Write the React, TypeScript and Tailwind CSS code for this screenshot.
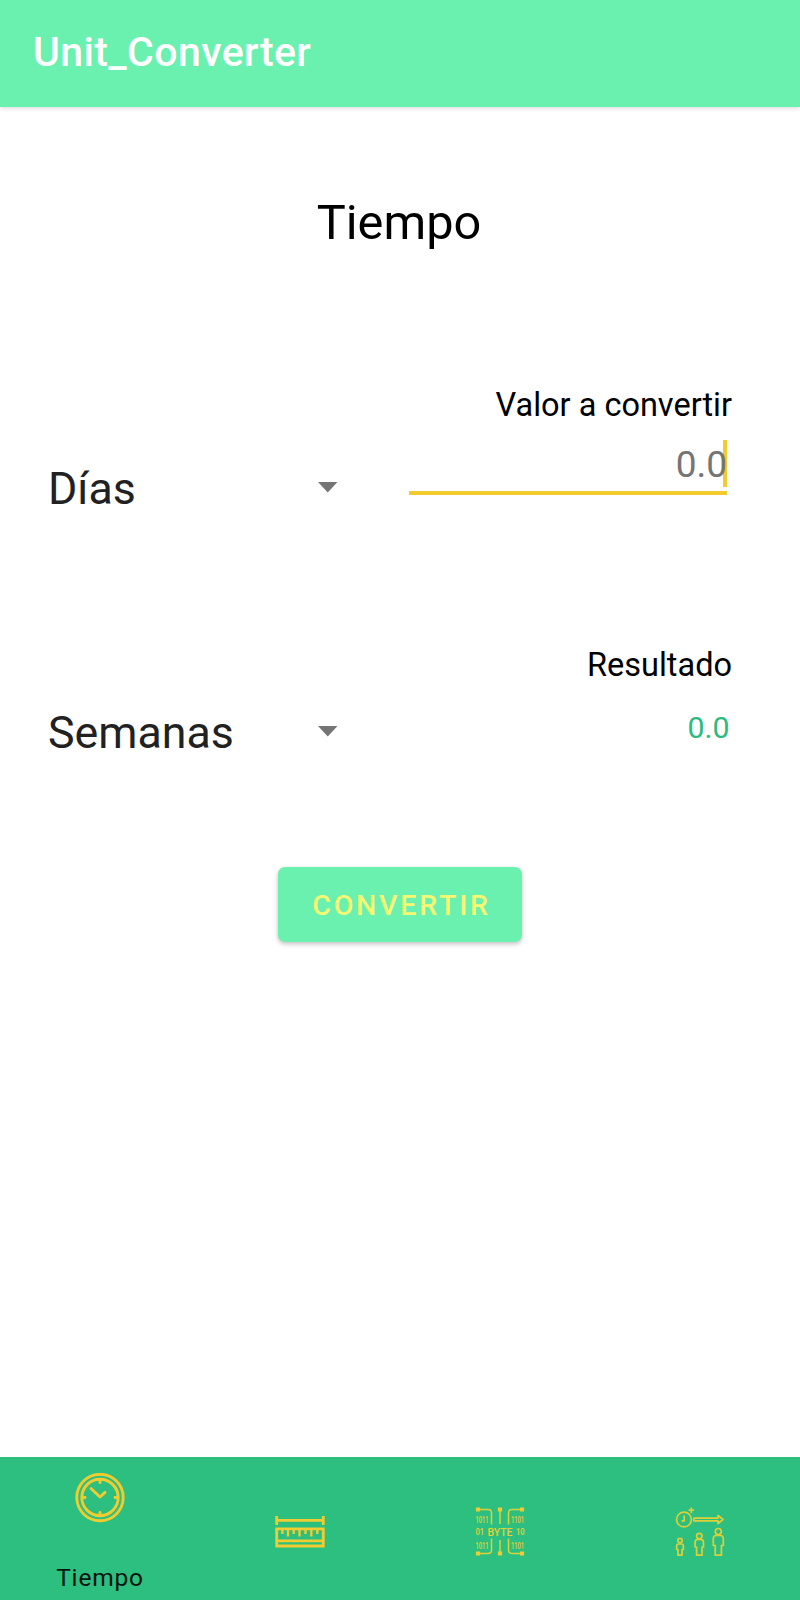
import type { ReactNode } from "react";

function Caret() {
  return (
    <svg width="20" height="11" viewBox="0 0 20 11" fill="#757575">
      <path d="M0 0h19.500L9.750 10.500z" />
    </svg>
  );
}

function Spinner({ value }: { value: string }) {
  return (
    <button className="flex h-[60px] w-[290px] items-center justify-between text-left text-[44.7px] leading-[60px] text-[#212121]">
      <span>{value}</span>
      <span className="pb-[3px]">
        <Caret />
      </span>
    </button>
  );
}

function ClockIcon() {
  return (
    <svg width="50" height="50" viewBox="0 0 50 50" fill="none" stroke="#f0cc30" strokeWidth="2.900" strokeLinecap="round">
      <circle cx="25" cy="24.500" r="23.200" />
      <circle cx="25" cy="24.500" r="18.200" />
      <path d="M16 15.500l9 8.500 5-4.600" strokeLinejoin="round" />
      <path d="M25 7.500v2M25 39.500v2M8 24.500h2M40 24.500h2" />
    </svg>
  );
}

function RulerIcon() {
  return (
    <svg width="50" height="50" viewBox="0 0 50 50" fill="none" stroke="#f0cc30" strokeWidth="2.800">
      <path d="M1.700 9v9M48.300 9v9M1.500 13.300h47" />
      <path d="M1.700 21.800h46.600v17.200H1.700zM1.600 33.800h46.800" />
      <path d="M7.400 22v5M13 22v7.500M18.700 22v5M24.500 22v7.500M30.500 22v5M36.300 22v7.500M42.300 22v5" strokeWidth="2.400" />
    </svg>
  );
}

function Bits({ x, y, width, children }: { x: number; y: number; width: number; children: string }) {
  return (
    <text x={x} y={y} textLength={width} lengthAdjust="spacingAndGlyphs" fontSize="9.500">
      {children}
    </text>
  );
}

function ByteIcon() {
  return (
    <svg className="overflow-visible" width="50" height="50" viewBox="0 0 50 50" fill="none" stroke="#d9d23a" strokeWidth="1.500">
      <path d="M4 2.500h9q3.500 0 3.500 3.500V17.500M46 2.500H37q-3.500 0-3.500 3.500V17.500M4 46.500h9q3.500 0 3.500-3.500V31.500M46 46.500H37q-3.500 0-3.500-3.500V31.500M25 4v13M25 46V33" />
      <path
        d="M1.500 1h3v3h-3zM23.500 1h3v3h-3zM45.500 1h3v3h-3zM1.500 45h3v3h-3zM23.500 45h3v3h-3zM45.500 45h3v3h-3z"
        fill="#f3cb2f"
        stroke="#f0cc30"
        strokeWidth="1.200"
      />
      <g fill="#e6d034" stroke="none" fontFamily="Roboto, sans-serif" fontWeight="500">
        <Bits x={0.5} y={15.5} width={13}>1011</Bits>
        <Bits x={36} y={15.5} width={13}>1101</Bits>
        <Bits x={0.5} y={28.3} width={8.5}>01</Bits>
        <Bits x={41} y={28.3} width={8.5}>10</Bits>
        <Bits x={0.5} y={41.5} width={13}>1011</Bits>
        <Bits x={36} y={41.5} width={13}>1101</Bits>
        <text x="12.500" y="28.700" fontSize="11.500" textLength="25" lengthAdjust="spacingAndGlyphs">
          BYTE
        </text>
      </g>
    </svg>
  );
}

function GrowthIcon() {
  return (
    <svg width="50" height="50" viewBox="0 0 50 50" fill="none" stroke="#ddcf38" strokeWidth="1.700" strokeLinejoin="round">
      <circle cx="9" cy="12.500" r="7.400" />
      <path d="M9.200 8.500v5.300H6.500M16.300 0.500v5.500M13.600 3.200h5.400" />
      <path d="M19 11.100h24V8.500l5 4-5 4V13.900H19z" />
      <circle cx="5" cy="33.500" r="2.200" />
      <path d="M3.700 37h2.600q2 0 2 2v3.500H7V48.200H3V42.500H1.700V39q0-2 2-2z" />
      <circle cx="24.300" cy="29" r="2.700" />
      <path d="M22.700 32.500h3.200q2.600 0 2.600 2.500v5H27v8.200h-5.400v-8.200h-1.500v-5q0-2.500 2.600-2.500z" />
      <circle cx="43.300" cy="24.500" r="3" />
      <path d="M41.300 28.500h4q3 0 3 3V38.500h-1.900v9.700h-6.200V38.500h-1.900v-7q0-3 3-3z" />
    </svg>
  );
}

function Tab({ label, children }: { label: string; children: ReactNode }) {
  return (
    <button aria-label={label} className="flex flex-1 items-center justify-center pt-[7px]">
      {children}
    </button>
  );
}

export default function App() {
  return (
    <div className="flex h-[1600px] w-[800px] flex-col bg-white font-[Roboto,sans-serif] text-black">
      <header className="flex h-[107px] shrink-0 items-center bg-[#6bf1af] pb-[4px] pl-[33px] shadow-[0_1px_5px_rgba(0,0,0,0.16)]">
        <h1 className="text-[41px] leading-[48px] font-medium tracking-[0.4px] text-white">Unit_Converter</h1>
      </header>

      <main className="flex flex-1 flex-col items-center">
        <h2 className="mt-[86px] pr-[2px] text-[48.700px] leading-[60px]">Tiempo</h2>

        <section className="mt-[132px] flex w-full justify-between pr-[68px] pl-[48px]">
          <div className="pt-[74px]">
            <Spinner value="Días" />
          </div>
          <div className="flex flex-col items-end">
            <label className="text-[32.500px] leading-[40px]">Valor a convertir</label>
            <div className="relative mt-[15px] mr-[5px] h-[55px] w-[318px] border-b-4 border-[#f3cb2f] text-right text-[37px] leading-[49px] text-[#757575]">
              <span className="absolute top-0 right-0 h-[47px] w-[4.500px] bg-[#f3cb2f]" />
              <span className="relative">0.0</span>
            </div>
          </div>
        </section>

        <section className="mt-[126px] flex w-full justify-between pr-[68px] pl-[48px]">
          <div className="pt-[58px]">
            <Spinner value="Semanas" />
          </div>
          <div className="flex flex-col items-end">
            <p className="text-[32.500px] leading-[40px]">Resultado</p>
            <output className="mt-[23px] mr-[2.500px] text-[30.300px] leading-[40px] text-[#2dba7f]">0.0</output>
          </div>
        </section>

        <button className="mt-[104px] h-[75px] w-[244px] rounded-[7px] bg-[#6bf1af] pt-[4px] pl-[3px] text-[28.500px] font-medium tracking-[2.800px] text-[#f5f872] shadow-[0_2px_5px_rgba(0,0,0,0.25)]">
          CONVERTIR
        </button>
      </main>

      <nav className="flex h-[143px] shrink-0 bg-[#2dbf80]">
        <button className="flex flex-1 flex-col items-center pt-[16px]">
          <ClockIcon />
          <span className="mt-[39px] text-[24.500px] leading-[32px] tracking-[0.800px] text-[#06150e]">Tiempo</span>
        </button>
        <Tab label="Longitud">
          <RulerIcon />
        </Tab>
        <Tab label="Datos">
          <ByteIcon />
        </Tab>
        <Tab label="Edad">
          <GrowthIcon />
        </Tab>
      </nav>
    </div>
  );
}
